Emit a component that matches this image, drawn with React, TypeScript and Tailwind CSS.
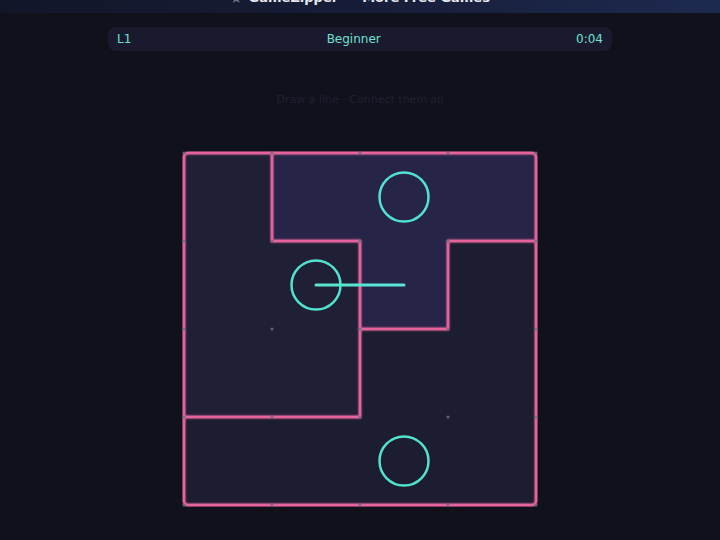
import React from 'react';

const CELL = 88;
const N = 4;

// walls between rooms, in grid units
const walls: [number, number, number, number][] = [
  [1, 0, 1, 1],
  [1, 1, 2, 1],
  [2, 1, 2, 3],
  [2, 2, 3, 2],
  [3, 1, 3, 2],
  [3, 1, 4, 1],
  [0, 3, 2, 3],
];

const rooms: { cells: [number, number][]; fill: string }[] = [
  { cells: [[0, 0], [0, 1], [1, 1], [0, 2], [1, 2]], fill: '#1f2036' },
  { cells: [[1, 0], [2, 0], [3, 0], [2, 1]], fill: '#262447' },
  { cells: [[0, 3], [1, 3], [2, 2], [2, 3], [3, 1], [3, 2], [3, 3]], fill: '#1c1d30' },
];

const nodes: [number, number][] = [[2, 0], [1, 1], [2, 3]];

const Board: React.FC = () => {
  const p = (v: number) => v * CELL + 2;
  const size = N * CELL + 4;
  return (
    <svg width={size} height={size} viewBox={`0 0 ${size} ${size}`} className="block">
      <defs>
        <filter id="glow" x="-10%" y="-10%" width="120%" height="120%">
          <feGaussianBlur stdDeviation="1.2" result="b" />
          <feMerge>
            <feMergeNode in="b" />
            <feMergeNode in="SourceGraphic" />
          </feMerge>
        </filter>
      </defs>
      {rooms.map((r, i) =>
        r.cells.map(([c, row]) => (
          <rect key={`${i}-${c}-${row}`} x={p(c)} y={p(row)} width={CELL} height={CELL} fill={r.fill} />
        ))
      )}
      <g stroke="#e6649d" strokeWidth={2.4} strokeLinecap="round" fill="none" filter="url(#glow)">
        <rect x={2} y={2} width={N * CELL} height={N * CELL} rx={4} />
        {walls.map(([x1, y1, x2, y2], i) => (
          <line key={i} x1={p(x1)} y1={p(y1)} x2={p(x2)} y2={p(y2)} />
        ))}
      </g>
      {Array.from({ length: (N + 1) * (N + 1) }).map((_, i) => (
        <circle key={i} cx={p(i % (N + 1))} cy={p(Math.floor(i / (N + 1)))} r={1.6} fill="#6c6c82" opacity={0.85} />
      ))}
      <line x1={p(1.5)} y1={p(1.5)} x2={p(2.5)} y2={p(1.5)} stroke="#58e6d3" strokeWidth={3} strokeLinecap="round" />
      {nodes.map(([c, r], i) => (
        <circle key={i} cx={p(c + 0.5)} cy={p(r + 0.5)} r={24.5} stroke="#52e2d0" strokeWidth={2.5} fill="none" />
      ))}
    </svg>
  );
};

export default function App() {
  return (
    <div
      className="w-[720px] h-[540px] overflow-hidden bg-[#10111b] flex flex-col items-center"
      style={{ fontFamily: '"DejaVu Sans", sans-serif' }}
    >
      {/* header, page scrolled so only its lower edge shows */}
      <div className="w-full h-[30px] mt-[-17px] shrink-0 bg-gradient-to-r from-[#121629] via-[#171d38] to-[#1d2a4f] flex items-center justify-center gap-6 text-[13px] font-bold text-[#e6e8f0]">
        <span className="flex items-center gap-1.5">
          <span className="text-[#6b7280] text-[14px]">★</span>GameZipper
        </span>
        <span>More Free Games</span>
      </div>

      <div className="mt-[14px] w-[504px] h-[24px] rounded-lg bg-[#1a1a2e] flex items-center justify-between px-[9px] text-[12px] text-[#6fe0cf]">
        <span>L1</span>
        <span>Beginner</span>
        <span>0:04</span>
      </div>

      <div className="mt-[41px] text-[11px] text-[#1f2133]">Draw a line · Connect them all</div>

      <div className="mt-[42px]">
        <Board />
      </div>
    </div>
  );
}
